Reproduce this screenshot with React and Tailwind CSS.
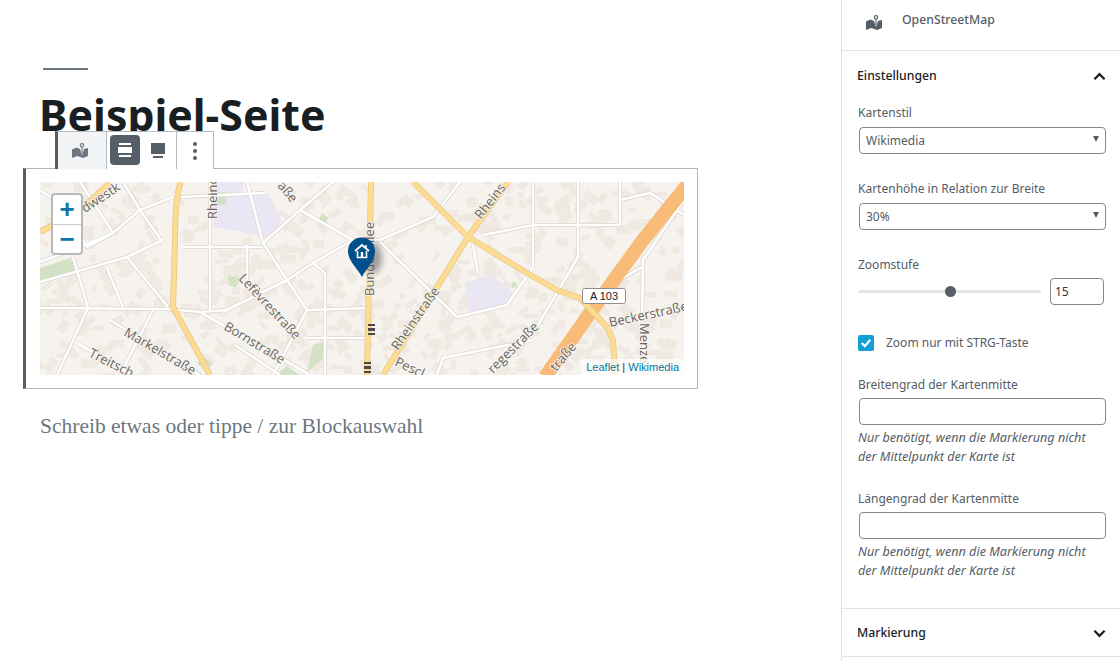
const sans = { fontFamily: '"Noto Sans", "Open Sans", sans-serif' };
const arial = { fontFamily: '"Liberation Sans", sans-serif' };

// pseudo random little houses, they only give the map its texture
function makeHouses() {
  const out = [];
  let seed = 7;
  const rnd = () => {
    seed = (seed * 16807) % 2147483647;
    return seed / 2147483647;
  };
  for (let i = 0; i < 620; i++) {
    const x = 40 + rnd() * 644;
    const y = 182 + rnd() * 193;
    out.push({ x, y, w: 5 + rnd() * 12, h: 4 + rnd() * 6, r: [0, 0, 35, -35, 55, -55][Math.floor(rnd() * 6)] });
  }
  return out;
}
const houses = makeHouses();

const smallRoads = [
  'M40 190 L62 204 L87 247 L113 233 L140 210 L163 243',
  'M80 182 L113 233',
  'M123 182 L140 210 L173 197',
  'M40 282 L127 257 L163 240',
  'M40 262 L73 250 L113 233',
  'M127 257 L168 307',
  'M73 257 L88 308 L57 375',
  'M107 268 L123 307',
  'M40 308 L167 309 L200 312 L227 310',
  'M153 310 L120 375',
  'M110 320 L200 375',
  'M77 343 L133 375',
  'M200 312 L310 375',
  'M210 182 L210 312',
  'M247 245 L247 283',
  'M180 197 L265 193',
  'M183 247 L263 247',
  'M223 312 L287 280 L313 263 L353 240 L380 240 L433 217 L460 182',
  'M247 182 L263 243 L287 280 L307 310 L273 375',
  'M263 243 L300 210 L333 182',
  'M300 210 L353 240',
  'M313 263 L325 273 L325 375',
  'M307 310 L367 308',
  'M307 338 L367 338',
  'M235 345 L280 375',
  'M380 242 L457 317 L507 305 L533 267 L533 182',
  'M473 245 L478 273',
  'M483 235 L533 225 L620 225 L620 182',
  'M578 182 L578 257 L537 327 L490 375',
  'M437 375 L443 358 L533 340',
  'M684 200 L643 260 L642 327 L646 375',
  'M642 267 L620 280 L606 305',
  'M620 200 L650 193 L684 215',
];

// only the part of each name that the map shows
const labels = [
  { t: 'dwestk', x: 85, y: 213, r: -33 },
  { t: 'Rheinc', x: 217, y: 219, r: -90 },
  { t: 'aße', x: 277, y: 186, r: 50 },
  { t: 'Bundesallee', x: 374, y: 296, r: -90 },
  { t: 'Rheinstraße', x: 398, y: 351, r: -55 },
  { t: 'Rheins', x: 481, y: 220, r: -52 },
  { t: 'Lefèvrestraße', x: 238, y: 279, r: 47 },
  { t: 'Bornstraße', x: 223, y: 329, r: 31 },
  { t: 'Markelstraße', x: 123, y: 335, r: 30 },
  { t: 'Treitsch', x: 88, y: 356, r: 27 },
  { t: 'regestraße', x: 493, y: 374, r: -45 },
  { t: 'Beckerstraße', x: 610, y: 327, r: -12 },
  { t: 'Menze', x: 640, y: 323, r: 90 },
  { t: 'traße', x: 556, y: 372, r: -50 },
  { t: 'Pescl', x: 394, y: 365, r: 25 },
];

const yellowRoads = [
  'M371 182 L367 375',
  'M181 182 C176 195 175 215 175 240 L173 307 L210 375',
  'M40 232 L78 212 L110 183',
  'M508 182 L468 237 L383 375',
  'M413 182 L468 237 L527 273 L557 290 L580 298 L607 327 L613 340 L615 375',
];

function MapDrawing() {
  return (
    <svg viewBox="40 182 644 193" className="block w-[644px] h-[193px]">
      <defs>
        <filter id="pinShadow" x="-50%" y="-50%" width="200%" height="200%">
          <feGaussianBlur stdDeviation="3" />
        </filter>
      </defs>
      <rect x="40" y="182" width="644" height="193" fill="#f6f3ee" />
      {houses.map((h, i) => (
        <rect key={i} x={h.x} y={h.y} width={h.w} height={h.h} fill="#efe9e1" transform={`rotate(${h.r} ${h.x} ${h.y})`} />
      ))}
      <polygon points="213,182 243,182 243,193 268,193 281,220 270,237 213,227" fill="#ebe6f4" />
      <polygon points="465,283 492,275 515,295 507,305 468,312" fill="#ebe6f4" />
      <polygon points="40,268 70,258 80,272 40,280" fill="#d3e2c4" />
      <polygon points="228,275 240,278 236,287 229,286" fill="#d3e2c4" />
      <polygon points="313,345 325,342 322,360 307,372" fill="#d3e2c4" />
      <polygon points="203,357 213,364 205,369 197,364" fill="#d3e2c4" />
      <polygon points="275,375 287,366 300,375" fill="#d3e2c4" />
      <polygon points="217,192 226,192 226,205 217,205" fill="#d3e2c4" />
      <polygon points="322,213 329,218 324,224 318,220" fill="#d3e2c4" />
      <polygon points="511,283 516,282 517,287 512,288" fill="#d3e2c4" />

      {smallRoads.map((d, i) => (
        <path key={i} d={d} fill="none" stroke="#d9d5cf" strokeWidth="4" />
      ))}
      {smallRoads.map((d, i) => (
        <path key={i} d={d} fill="none" stroke="#ffffff" strokeWidth="2.6" />
      ))}

      {/* motorway */}
      <path d="M688 184 L643 240 L590 313 L545 377" fill="none" stroke="#f8bc78" strokeWidth="14" />
      <g fill="none" stroke="#e8c683" strokeWidth="6">
        {yellowRoads.map((d, i) => (
          <path key={i} d={d} />
        ))}
      </g>
      <g fill="none" stroke="#fcdc92" strokeWidth="4.6">
        {yellowRoads.map((d, i) => (
          <path key={i} d={d} />
        ))}
      </g>

      {labels.map((l, i) => (
        <text
          key={i}
          x={l.x}
          y={l.y}
          transform={`rotate(${l.r} ${l.x} ${l.y})`}
          fontSize="13"
          fontFamily='"Open Sans", sans-serif'
          fill="#68635f"
          stroke="#f8f6f2"
          strokeWidth="1.6"
          paintOrder="stroke"
        >
          {l.t}
        </text>
      ))}

      {/* tram stops */}
      <g fill="#4a4a4a">
        <rect x="368" y="324" width="7" height="2" />
        <rect x="368" y="328" width="7" height="3" />
        <rect x="368" y="333" width="7" height="2" />
        <rect x="364" y="362" width="7" height="2" />
        <rect x="364" y="366" width="7" height="3" />
        <rect x="364" y="371" width="7" height="2" />
      </g>

      <rect x="582.5" y="288.5" width="43" height="15" rx="2" fill="#fff" stroke="#8f8f8f" />
      <text x="604" y="300" textAnchor="middle" fontSize="11" fontFamily='"Liberation Sans", sans-serif' fill="#222">A 103</text>

      {/* marker */}
      <ellipse cx="374" cy="258" rx="8" ry="15" fill="#555" opacity="0.55" filter="url(#pinShadow)" />
      <path d="M362 277 C358 269 348 261 348 251 A13.5 13.5 0 0 1 375 251 C375 261 366 269 362 277 Z" fill="#00508c" />
      <g fill="none" stroke="#fff">
        <path d="M355 251 L362 245 L369 251" strokeWidth="2" />
        <path d="M357.5 251 V257.5 H366.5 V251" strokeWidth="1.6" />
        <path d="M366 248 V245" strokeWidth="1.6" />
        <path d="M362 252 V257" strokeWidth="2.4" />
      </g>
    </svg>
  );
}

function MapIcon({ className }) {
  return (
    <svg viewBox="0 0 16 15" className={className} fill="currentColor">
      <path d="M0 6.5 L4.5 4.5 L8 6 L10 12 L12 6 L16 5 L16 13 L11 15 L5.5 13 L0 15 Z" />
      <circle cx="10" cy="2.3" r="1.7" fill="none" stroke="currentColor" strokeWidth="1.1" />
      <path d="M10 4 L10 10" stroke="currentColor" strokeWidth="1.1" />
    </svg>
  );
}

function Chevron({ up }) {
  return (
    <svg viewBox="0 0 14 9" className="w-[13px] h-[9px]" fill="none" stroke="#191e23" strokeWidth="2.4">
      <path d={up ? 'M1.5 7.5 L7 2 L12.5 7.5' : 'M1.5 1.5 L7 7 L12.5 1.5'} />
    </svg>
  );
}

function Label({ children, className = '' }) {
  return <div className={`ml-[1px] text-[12px] leading-[18px] text-[#555d66] ${className}`}>{children}</div>;
}

function SelectBox({ value }) {
  return (
    <div className="relative ml-[2px] mt-[5px] w-[247px]">
      <select
        defaultValue={value}
        className="block h-[27px] w-full appearance-none rounded border border-[#7e8993] bg-white pl-[6px] text-[12px] text-[#555d66]"
      >
        <option>{value}</option>
      </select>
      <span className="absolute right-[7px] top-[9px] h-0 w-0 border-x-[3px] border-t-[6px] border-x-transparent border-t-[#555d66]" />
    </div>
  );
}

function CoordField({ label, className = '' }) {
  return (
    <div className={className}>
      <Label>{label}</Label>
      <input readOnly className="ml-[2px] mt-[4px] block h-[27px] w-[247px] rounded border border-[#7e8993] bg-white" />
      <p className="ml-[1px] mt-[3px] text-[12.6px] italic leading-[19px] text-[#555d66]">
        Nur benötigt, wenn die Markierung nicht
        <br />
        der Mittelpunkt der Karte ist
      </p>
    </div>
  );
}

function Sidebar() {
  return (
    <aside className="h-[661px] w-[279px] shrink-0 overflow-hidden border-l border-[#e2e4e7] bg-white" style={sans}>
      <div className="flex h-[51px] items-start border-b border-[#e2e4e7] pl-[24px] pt-[12px] text-[#555d66]">
        <MapIcon className="mt-[3px] h-[15px] w-[16px]" />
        <span className="ml-[20px] text-[12.25px] font-medium leading-[16px]">OpenStreetMap</span>
      </div>
      <div className="h-[558px] border-b border-[#e2e4e7] pl-[15px] pr-[14px]">
        <div className="flex h-[49px] items-center justify-between pt-[2px]">
          <span className="text-[12.25px] font-medium text-[#191e23]">Einstellungen</span>
          <Chevron up />
        </div>
        <Label className="mt-[4px]">Kartenstil</Label>
        <SelectBox value="Wikimedia" />
        <Label className="mt-[26px]">Kartenhöhe in Relation zur Breite</Label>
        <SelectBox value="30%" />
        <Label className="mt-[26px]">Zoomstufe</Label>
        <div className="mt-[4px] flex items-center">
          <div className="relative ml-[1px] h-[3px] w-[183px] rounded bg-[#e2e4e7]">
            <span className="absolute left-[87px] top-[-4px] h-[11px] w-[11px] rounded-full bg-[#555d66]" />
          </div>
          <input
            readOnly
            defaultValue="15"
            className="ml-[9px] h-[27px] w-[54px] rounded border border-[#7e8993] bg-white pl-[4px] text-[12px] text-[#32373c]"
          />
        </div>
        <div className="ml-[1px] mt-[28px] flex items-center">
          <span className="flex h-[16px] w-[16px] items-center justify-center rounded-[2px] bg-[#11a0d2]">
            <svg viewBox="0 0 16 16" className="h-[14px] w-[14px]" fill="none" stroke="#fff" strokeWidth="2.6">
              <path d="M3 8 L6.6 11.6 L13 4.4" />
            </svg>
          </span>
          <span className="ml-[12px] pt-[1px] text-[12px] leading-[18px] text-[#555d66]">Zoom nur mit STRG-Taste</span>
        </div>
        <CoordField label="Breitengrad der Kartenmitte" className="mt-[24px]" />
        <CoordField label="Längengrad der Kartenmitte" className="mt-[24px]" />
      </div>
      <div className="flex h-[48px] items-center justify-between border-b border-[#e2e4e7] pl-[15px] pr-[14px] pt-[1px]">
        <span className="text-[12.25px] font-medium text-[#191e23]">Markierung</span>
        <Chevron />
      </div>
    </aside>
  );
}

function Toolbar() {
  return (
    <div className="absolute left-[29px] top-[-38px] flex h-[38px] border border-b-0 border-[#b5bcc2] border-l-[3px] border-l-[#555d66] bg-white">
      <div className="flex w-[49px] items-center justify-center border-r border-[#b5bcc2] bg-[#f3f4f5] pr-[4px] text-[#6c7781]">
        <MapIcon className="h-[15px] w-[16px]" />
      </div>
      <div className="flex w-[70px] items-center border-r border-[#b5bcc2] pl-[3px]">
        <div className="mt-[3px] flex h-[30px] w-[30px] items-center justify-center self-start rounded bg-[#555d66]">
          <svg viewBox="0 0 14 14" className="h-[14px] w-[14px]" fill="#fff">
            <rect x="1" y="0" width="12" height="2" />
            <rect x="0" y="4" width="14" height="6" />
            <rect x="1" y="12" width="12" height="2" />
          </svg>
        </div>
        <svg viewBox="0 0 16 16" className="ml-[10px] h-[16px] w-[16px]" fill="#555d66">
          <rect x="1" y="0" width="14" height="11" />
          <rect x="3" y="13" width="10" height="2" />
        </svg>
      </div>
      <div className="flex w-[36px] flex-col items-center justify-center gap-[3px]">
        <span className="h-[4px] w-[4px] rounded-full bg-[#555d66]" />
        <span className="h-[4px] w-[4px] rounded-full bg-[#555d66]" />
        <span className="h-[4px] w-[4px] rounded-full bg-[#555d66]" />
      </div>
    </div>
  );
}

export default function App() {
  return (
    <div className="flex h-[661px] w-[1120px] overflow-hidden bg-white">
      <main className="h-[661px] w-[841px] shrink-0 pl-[23px] pt-[68px]">
        <div className="ml-[20px] h-[2px] w-[45px] bg-[#6c7781]" />
        <h1 className="ml-[16px] mt-[17px] h-[81px] text-[42.85px] font-bold leading-[56px] text-[#191e23]" style={sans}>
          Beispiel-Seite
        </h1>
        <div className="relative w-[675px] border border-l-[3px] border-[#b5b5b5] border-l-[#555d66] bg-white pb-[13px] pl-[14px] pt-[13px]">
          <Toolbar />
          <div className="relative h-[193px] w-[644px] overflow-hidden">
            <MapDrawing />
            <div className="absolute left-[11px] top-[11px] w-[32px] overflow-hidden rounded border-2 border-[#b9b9b7] bg-white text-[#0d76a8]">
              <div className="flex h-[30px] items-center justify-center border-b border-[#cccccc] pb-[2px] text-[26px] font-bold leading-none" style={arial}>
                +
              </div>
              <div className="flex h-[28px] items-center justify-center text-[26px] font-bold leading-none" style={arial}>
                −
              </div>
            </div>
            <div className="absolute bottom-0 right-0 bg-white/70 px-[5px] text-[11px] leading-[16px] text-[#333]" style={arial}>
              <span className="text-[#0078a8]">Leaflet</span> | <span className="text-[#0078a8]">Wikimedia</span>
            </div>
          </div>
        </div>
        <p className="ml-[17px] mt-[21px] text-[21.5px] leading-[32px] text-[#6c7781]" style={{ fontFamily: '"Liberation Serif", serif' }}>
          Schreib etwas oder tippe / zur Blockauswahl
        </p>
      </main>
      <Sidebar />
    </div>
  );
}
